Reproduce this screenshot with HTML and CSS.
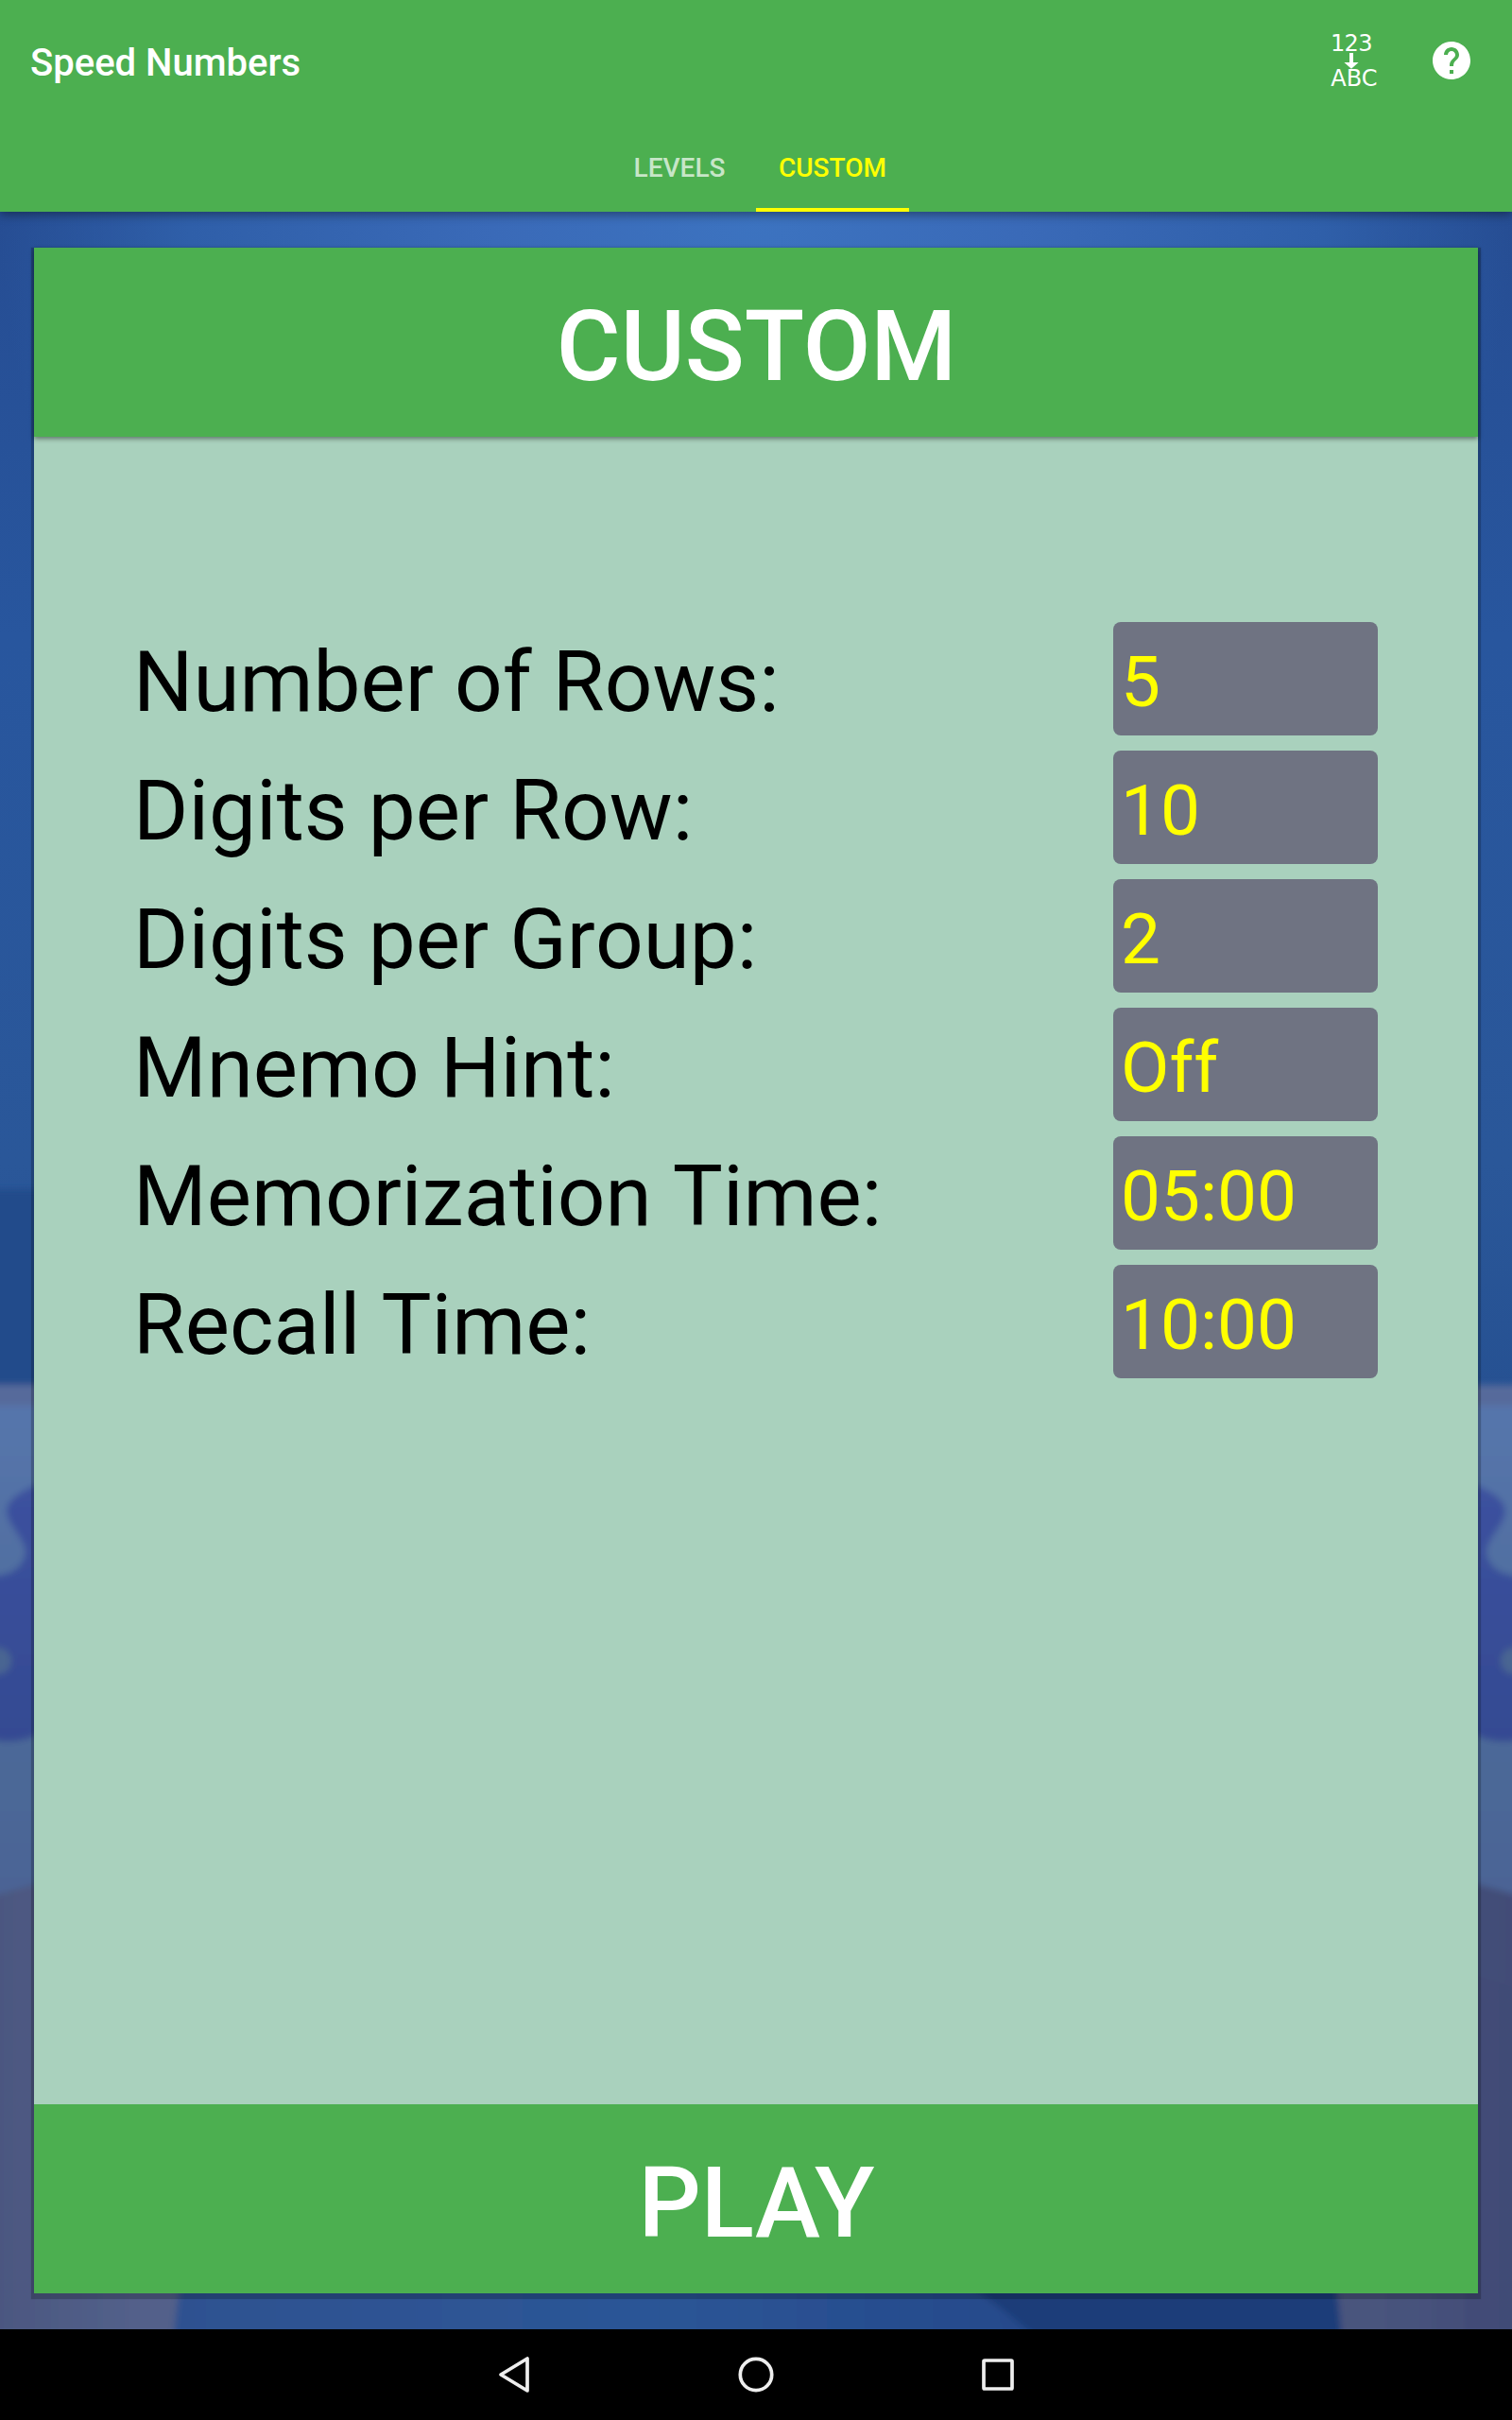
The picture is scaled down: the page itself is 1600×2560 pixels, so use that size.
FILE: index.html
```html
<!DOCTYPE html>
<html lang="en">
<head>
<meta charset="utf-8">
<title>Speed Numbers</title>
<link rel="stylesheet" href="styles.css">
</head>
<body>
<div class="screen">
  <header class="appbar">
    <div class="toolbar">
      <h1 class="app-title">Speed Numbers</h1>
      <div class="actions">
        <svg class="icon-convert" viewBox="0 0 60 72" width="60" height="72">
          <text x="8" y="26" textLength="44.500">123</text>
          <path d="M28 28h4v10h5.600l-7.600 6.700l-7.600-6.700h5.600z"/>
          <text x="8.300" y="63">ABC</text>
        </svg>
        <svg class="icon-help" viewBox="0 0 24 24" width="48" height="48">
          <path d="M12 2C6.480 2 2 6.480 2 12s4.480 10 10 10 10-4.480 10-10S17.520 2 12 2zm1 17h-2v-2h2v2zm2.070-7.750l-.9.920C13.450 12.900 13 13.500 13 15h-2v-.5c0-1.100.450-2.100 1.170-2.830l1.240-1.260c.370-.360.590-.860.590-1.410 0-1.100-.9-2-2-2s-2 .9-2 2H8c0-2.210 1.790-4 4-4s4 1.790 4 4c0 .880-.360 1.680-.930 2.250z"/>
        </svg>
      </div>
    </div>
    <nav class="tabs">
      <a class="tab">LEVELS</a>
      <a class="tab tab-active">CUSTOM</a>
    </nav>
  </header>
  <main class="stage">
    <svg class="backdrop" viewBox="0 0 1600 2240" preserveAspectRatio="none">
      <defs>
        <filter id="soft" x="-10%" y="-10%" width="120%" height="120%"><feGaussianBlur stdDeviation="3.500"/></filter>
        <linearGradient id="sky" x1="0" y1="0" x2="0" y2="1">
          <stop offset="0" stop-color="#264d93"/><stop offset=".2" stop-color="#28569e"/><stop offset=".45" stop-color="#2a5799"/><stop offset=".56" stop-color="#265192"/>
        </linearGradient>
        <radialGradient id="glow" gradientUnits="userSpaceOnUse" cx="800" cy="0" r="800">
          <stop offset="0" stop-color="#3c73c0"/><stop offset=".35" stop-color="#3a6ab8"/><stop offset=".75" stop-color="#2f5fa9"/><stop offset="1" stop-color="#2f5fa9" stop-opacity="0"/>
        </radialGradient>
        <linearGradient id="ground" x1="0" y1="0" x2="0" y2="1">
          <stop offset="0" stop-color="#5676ad"/><stop offset=".6" stop-color="#4c6998"/><stop offset="1" stop-color="#4a6294"/>
        </linearGradient>
        <linearGradient id="blob" x1="0" y1="0" x2="0" y2="1">
          <stop offset="0" stop-color="#3c519f"/><stop offset="1" stop-color="#344a92"/>
        </linearGradient>
        <linearGradient id="base" x1="0" y1="0" x2="1" y2="0">
          <stop offset="0" stop-color="#4b567f"/><stop offset=".1" stop-color="#52608a"/><stop offset=".9" stop-color="#48547d"/><stop offset="1" stop-color="#414b76"/>
        </linearGradient>
        <linearGradient id="floor" x1="0" y1="0" x2="1" y2="0">
          <stop offset="0" stop-color="#2d5190"/><stop offset=".4" stop-color="#2c5596"/><stop offset=".75" stop-color="#24498a"/>
        </linearGradient>
      </defs>
      <rect width="1600" height="2240" fill="url(#sky)"/>
      <rect width="1600" height="800" fill="url(#glow)"/>
      <g filter="url(#soft)">
        <path d="M-20 1034H60V1250H-20z" fill="#234c8b"/>
        <rect x="-20" y="1241" width="1640" height="600" fill="url(#ground)"/>
        <rect x="-20" y="1241" width="1640" height="22" fill="#566a9b"/>
        <path d="M50 1342C24 1352 6 1362 7 1376C10 1392 28 1405 27 1420C22 1438 8 1444-20 1444V1612C5 1622 25 1620 50 1606z" fill="url(#blob)"/>
        <path d="M1550 1342C1576 1352 1594 1362 1593 1376C1590 1392 1572 1405 1573 1420C1578 1438 1592 1444 1620 1444V1612C1595 1622 1575 1620 1550 1606z" fill="url(#blob)"/>
        <circle cx="-2" cy="1533" r="14" fill="#4a6592"/><circle cx="1602" cy="1533" r="14" fill="#4a6592"/>
        <path d="M-20 1785L40 1768H1560L1620 1785V2260H-20z" fill="url(#base)"/>
        <path d="M1550 1862L1620 1885V2260H1550z" fill="#414b76" opacity=".7"/>
        <path d="M192 2180H1413L1421 2260H182z" fill="url(#floor)"/>
        <path d="M990 2180C1030 2190 1060 2220 1112 2260H1421L1413 2180z" fill="#1c3c79"/>
      </g>
    </svg>
    <section class="card">
      <h2 class="banner banner-top">CUSTOM</h2>
      <div class="settings">
        <div class="row"><span class="label">Number of Rows:</span><span class="field">5</span></div>
        <div class="row"><span class="label">Digits per Row:</span><span class="field">10</span></div>
        <div class="row"><span class="label">Digits per Group:</span><span class="field">2</span></div>
        <div class="row"><span class="label">Mnemo Hint:</span><span class="field">Off</span></div>
        <div class="row"><span class="label">Memorization Time:</span><span class="field">05:00</span></div>
        <div class="row"><span class="label">Recall Time:</span><span class="field">10:00</span></div>
      </div>
      <div class="banner">PLAY</div>
    </section>
  </main>
  <footer class="navbar">
    <svg viewBox="0 0 40 40" width="40" height="40"><path d="M34 3V37L6 20z"/></svg>
    <svg viewBox="0 0 40 40" width="40" height="40"><circle cx="20" cy="20" r="16.700"/></svg>
    <svg viewBox="0 0 40 40" width="40" height="40"><rect x="5" y="5" width="30" height="30" rx="1"/></svg>
  </footer>
</div>
</body>
</html>
```
FILE: styles.css
```css
* { box-sizing: border-box; }
body { margin: 0; font-family: Roboto, sans-serif; }
h1, h2 { margin: 0; }
.screen { width: 1600px; height: 2560px; display: flex; flex-direction: column; overflow: hidden; }
.appbar { position: relative; z-index: 2; height: 224px; background: #4caf50; box-shadow: 0 3px 10px rgba(0,0,0,.4); display: flex; flex-direction: column; }
.toolbar { height: 128px; padding: 0 40px 0 32px; display: flex; align-items: center; justify-content: space-between; }
.app-title { font-size: 40px; font-weight: 500; color: #fff; line-height: 124px; padding-top: 6px; }
.actions { display: flex; align-items: center; gap: 52px; fill: #fff; }
.icon-convert { font: 24px "DejaVu Sans", sans-serif; overflow: visible; }
.tabs { height: 96px; display: flex; justify-content: center; }
/* equal widths put the edge between the two tabs on the screen's centre line */
.tab { width: 162px; text-align: center; font-size: 28px; font-weight: 500; line-height: 100px; color: rgba(255,255,255,.7); }
.tab-active { color: #ff0; box-shadow: inset 0 -4px #ff0; }
.stage { position: relative; height: 2240px; padding: 38px 36px; }
.backdrop { position: absolute; inset: 0; width: 100%; height: 100%; }
.card { position: relative; height: 2164px; background: #a9d1bd; display: flex; flex-direction: column; box-shadow: 0 3px 1px 3px rgba(0,0,0,.22); }
.banner { height: 200px; flex: none; background: #4caf50; color: #fff; font-size: 104px; font-weight: 500; line-height: 209px; text-align: center; padding-left: 1px; }
.banner-top { box-shadow: 0 2px 5px rgba(0,0,0,.45); }
.settings { flex: 1; padding: 196px 106px 0; display: flex; flex-direction: column; gap: 16px; }
.row { height: 120px; display: flex; justify-content: space-between; }
.label { font-size: 89px; line-height: 128px; color: #000; white-space: nowrap; margin-left: -1px; font-kerning: none; }
.field { width: 280px; height: 120px; border-radius: 8px; background: #6f7382; color: #ff0; font-size: 74.700px; line-height: 128px; padding-left: 8px; }
.navbar { height: 96px; background: #000; display: flex; align-items: center; justify-content: center; gap: 216px; }
.navbar svg { fill: none; stroke: #eee; stroke-width: 3.7; stroke-linejoin: round; }
```
